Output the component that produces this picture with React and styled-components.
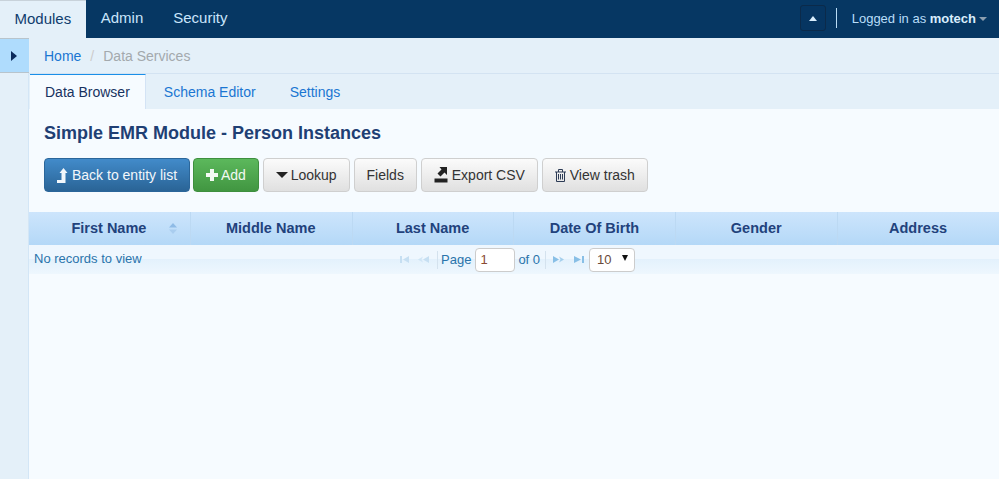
import React from "react";
import styled, { createGlobalStyle } from "styled-components";

const Global = createGlobalStyle`
  html, body { margin: 0; padding: 0; }
  body {
    font-family: "Liberation Sans", Arial, sans-serif;
    font-size: 14px;
    background: #f6fbff;
    color: #333;
  }
  * { box-sizing: border-box; }
`;

const Page = styled.div`
  width: 999px;
  height: 479px;
  display: flex;
  flex-direction: column;
  overflow: hidden;
`;

const Navbar = styled.div`
  height: 38px;
  flex: none;
  background: #063763;
  display: flex;
  align-items: stretch;
`;

const NavTab = styled.div`
  padding: 0 ${(p) => (p.$active ? "14.5px" : "15px")} 3px;
  display: flex;
  align-items: center;
  font-size: 15px;
  color: ${(p) => (p.$active ? "#0f3d6e" : "#c9e5fb")};
  background: ${(p) => (p.$active ? "#e4f0f9" : "transparent")};
  border-top: ${(p) => (p.$active ? "1px solid #c8d2da" : "none")};
`;

const NavRight = styled.div`
  margin-left: auto;
  display: flex;
  align-items: center;
  padding: 0 12px 2px 0;
`;

const CollapseButton = styled.div`
  width: 26px;
  height: 26px;
  background: #063561;
  border: 1px solid #0b2a4a;
  border-radius: 3px;
  display: flex;
  align-items: center;
  justify-content: center;
  margin-right: 10px;
`;

const UpCaret = styled.span`
  width: 0;
  height: 0;
  border-left: 4px solid transparent;
  border-right: 4px solid transparent;
  border-bottom: 5px solid #d9eefd;
`;

const NavDivider = styled.div`
  width: 1px;
  height: 20px;
  background: #b9dcf5;
  margin-right: 15px;
`;

const UserText = styled.div`
  font-size: 13px;
  color: #b9def9;
  b { color: #d8edfc; }
`;

const UserCaret = styled.span`
  display: inline-block;
  width: 0;
  height: 0;
  margin-left: 3px;
  vertical-align: 2px;
  border-left: 4px solid transparent;
  border-right: 4px solid transparent;
  border-top: 4px solid #8c9fb0;
`;

const Body = styled.div`
  flex: 1;
  display: flex;
  min-height: 0;
`;

const Sidebar = styled.div`
  width: 29px;
  flex: none;
  background: #e4f0f9;
  border-right: 1px solid #d3e6f6;
`;

const SidebarToggle = styled.div`
  height: 35px;
  width: 29px;
  background: #afdcfd;
  border-top: 1px solid #b8c4cc;
  border-bottom: 1px solid #b8c4cc;
  display: flex;
  align-items: center;
  justify-content: center;
  padding-right: 1px;
`;

const RightCaret = styled.span`
  width: 0;
  height: 0;
  border-top: 5px solid transparent;
  border-bottom: 5px solid transparent;
  border-left: 6px solid #0b2a5c;
`;

const Main = styled.div`
  flex: 1;
  min-width: 0;
  display: flex;
  flex-direction: column;
`;

const Breadcrumb = styled.div`
  height: 36px;
  flex: none;
  background: #e4f0f9;
  border-bottom: 1px solid #d3e3f2;
  display: flex;
  align-items: center;
  padding: 1px 0 0 15px;
  font-size: 14px;
  color: #a3a9ad;
`;

const Crumb = styled.a`
  color: #1a76d2;
`;

const Slash = styled.span`
  color: #ccc;
  padding: 0 9px;
`;

const Tabs = styled.div`
  height: 35px;
  flex: none;
  background: #e4f0f9;
  display: flex;
  align-items: stretch;
  padding-left: 1px;
`;

const Tab = styled.div`
  display: flex;
  align-items: center;
  font-size: 14px;
  padding: 0 ${(p) => (p.$active ? "15px" : "16px")} 0 ${(p) => (p.$active ? "15px" : "18px")};
  color: ${(p) => (p.$active ? "#17325f" : "#1a76d2")};
  background: ${(p) => (p.$active ? "#f6fbff" : "transparent")};
  border-top: 1px solid ${(p) => (p.$active ? "#1a8fe8" : "transparent")};
  border-right: ${(p) => (p.$active ? "1px solid #d3e3f5" : "none")};
`;

const Content = styled.div`
  flex: 1;
  background: #f6fbff;
`;

const Heading = styled.h1`
  margin: 0;
  padding: 14px 0 0 15px;
  height: 49px;
  font-size: 18px;
  line-height: 20px;
  font-weight: bold;
  color: #1f3f74;
`;

const Toolbar = styled.div`
  display: flex;
  gap: 3.89px;
  padding-left: 15px;
  height: 54px;
`;

const buttonColors = {
  primary: "background: linear-gradient(#428bca, #2a6496); border-color: #2b669a; color: #f2f7fb; margin-right: -1px;",
  success: "background: linear-gradient(#5cb85c, #419641); border-color: #3e8f3e; color: #f2f9f2;",
  plain: "background: linear-gradient(#fbfbfb, #e0e0e0); border-color: #cfcfcf; color: #333;",
};

const Button = styled.div`
  height: 34px;
  padding: 0 12px;
  display: flex;
  align-items: center;
  gap: 3px;
  font-size: 14px;
  border: 1px solid;
  border-radius: 4px;
  ${(p) => buttonColors[p.$kind || "plain"]}
`;

const GridHeader = styled.div`
  height: 33px;
  display: flex;
  background: linear-gradient(#cde5fc, #b4d8f7);
`;

const HeaderCell = styled.div`
  flex: 1;
  position: relative;
  display: flex;
  align-items: center;
  justify-content: center;
  font-size: 14.5px;
  font-weight: bold;
  color: #22427c;
  padding: 0 1px 2px 0;
  border-right: 1px solid #bcd9f3;
  &:last-child { border-right: none; }
`;

const SortIcon = styled.svg`
  position: absolute;
  right: 13px;
  top: 11px;
`;

const Pager = styled.div`
  height: 29px;
  position: relative;
  display: flex;
  align-items: center;
  font-size: 13px;
  color: #2a74ab;
  background: linear-gradient(#eff7fe 0%, #eff7fe 48%, #e3f1fc 48%, #eef7fe 100%);
`;

const PagerInfo = styled.div`
  position: absolute;
  left: 5px;
  top: 6px;
`;

const PagerCenter = styled.div`
  display: flex;
  align-items: center;
  margin-left: 371px;
`;

const PagerIcon = styled.svg`
  display: block;
  margin-right: ${(p) => p.$gap || 0}px;
`;

const PagerSep = styled.div`
  width: 1px;
  height: 18px;
  background: #d4e2ee;
  margin: ${(p) => p.$margin};
`;

const PageInput = styled.div`
  width: 40px;
  height: 24px;
  margin: 0 3px 0 4px;
  padding: 0 4px;
  background: #fff;
  border: 1px solid #ccc;
  border-radius: 4px;
  color: #8a4b33;
  display: flex;
  align-items: center;
`;

const PageSize = styled.div`
  width: 46px;
  height: 24px;
  margin-left: 5px;
  padding: 0 6px 0 7px;
  background: #fff;
  border: 1px solid #ccc;
  border-radius: 4px;
  color: #6a4a3a;
  display: flex;
  align-items: center;
  justify-content: space-between;
`;

const SizeCaret = styled.span`
  width: 0;
  height: 0;
  border-left: 3.5px solid transparent;
  border-right: 3.5px solid transparent;
  border-top: 6px solid #111;
  margin-top: -3px;
`;

const LookupCaret = styled.span`
  width: 0;
  height: 0;
  border-left: 6px solid transparent;
  border-right: 6px solid transparent;
  border-top: 6px solid #222;
`;

const BackIcon = () => (
  <svg width="11" height="15" viewBox="0 0 11 15" style={{ marginRight: 1 }}>
    <path d="M6.5 0 L10.5 5 H8.5 V15 H0 V12 H4.5 V5 H2.5 Z" fill="#f2f7fb" />
  </svg>
);

const PlusIcon = () => (
  <svg width="12" height="12" viewBox="0 0 12 12">
    <path d="M4 0 H8 V4 H12 V8 H8 V12 H4 V8 H0 V4 H4 Z" fill="#f4faf4" />
  </svg>
);

const ExportIcon = () => (
  <svg width="14" height="16" viewBox="0 0 14 16" style={{ marginRight: 1 }}>
    <path d="M0.5 11.5 H13.5 V15.5 H0.5 Z" fill="#222" />
    <path d="M5.5 0 H13 V8 L10.5 5.5 L6.5 9.5 L3.5 6.5 L7.5 2.5 Z" fill="#222" />
  </svg>
);

const TrashIcon = () => (
  <svg width="11" height="13" viewBox="0 0 11 13" fill="none" stroke="#2c3b55" strokeWidth="1" style={{ marginRight: 1 }}>
    <path d="M0 3 H11 M1.5 3 V12.5 H9.5 V3 M3.5 3 V0.5 H7.5 V3 M3.5 5 V10.5 M5.5 5 V10.5 M7.5 5 V10.5" />
  </svg>
);

const pagerPaths = {
  first: <path d="M0 0 H2 V7 H0 Z M3 3.5 L9 0 V7 Z" />,
  prev: (
    <>
      <path d="M0 3.5 L5 0.5 L3.5 3.5 L5 6.5 Z" opacity="0.7" />
      <path d="M5 3.5 L11 0 V7 Z" />
    </>
  ),
  next: (
    <>
      <path d="M0 0 L6 3.5 L0 7 Z" />
      <path d="M6 0.5 L11 3.5 L6 6.5 L7.5 3.5 Z" opacity="0.7" />
    </>
  ),
  last: <path d="M0 0 L7 3.5 L0 7 Z M8 0 H10 V7 H8 Z" />,
};

const pagerWidths = { first: 9, prev: 11, next: 11, last: 10 };

const PagerGlyph = ({ name, disabled, gap }) => (
  <PagerIcon
    $gap={gap}
    width={pagerWidths[name]}
    height="7"
    viewBox={`0 0 ${pagerWidths[name]} 7`}
    fill={disabled ? "#c6dff2" : "#88bfe6"}
  >
    {pagerPaths[name]}
  </PagerIcon>
);

const columns = ["First Name", "Middle Name", "Last Name", "Date Of Birth", "Gender", "Address"];

export default function App() {
  return (
    <Page>
      <Global />
      <Navbar>
        <NavTab $active>Modules</NavTab>
        <NavTab>Admin</NavTab>
        <NavTab>Security</NavTab>
        <NavRight>
          <CollapseButton>
            <UpCaret />
          </CollapseButton>
          <NavDivider />
          <UserText>
            Logged in as <b>motech</b>
            <UserCaret />
          </UserText>
        </NavRight>
      </Navbar>
      <Body>
        <Sidebar>
          <SidebarToggle>
            <RightCaret />
          </SidebarToggle>
        </Sidebar>
        <Main>
          <Breadcrumb>
            <Crumb>Home</Crumb>
            <Slash>/</Slash>
            Data Services
          </Breadcrumb>
          <Tabs>
            <Tab $active>Data Browser</Tab>
            <Tab>Schema Editor</Tab>
            <Tab>Settings</Tab>
          </Tabs>
          <Content>
            <Heading>Simple EMR Module - Person Instances</Heading>
            <Toolbar>
              <Button $kind="primary">
                <BackIcon />
                Back to entity list
              </Button>
              <Button $kind="success">
                <PlusIcon />
                Add
              </Button>
              <Button>
                <LookupCaret />
                Lookup
              </Button>
              <Button>Fields</Button>
              <Button>
                <ExportIcon />
                Export CSV
              </Button>
              <Button>
                <TrashIcon />
                View trash
              </Button>
            </Toolbar>
            <GridHeader>
              {columns.map((c, i) => (
                <HeaderCell key={c}>
                  {c}
                  {i === 0 && (
                    <SortIcon width="8" height="11" viewBox="0 0 8 11">
                      <path d="M4 0 L8 4.5 H0 Z" fill="#8fbbe6" />
                      <path d="M4 11 L8 6.5 H0 Z" fill="#a9cdef" />
                    </SortIcon>
                  )}
                </HeaderCell>
              ))}
            </GridHeader>
            <Pager>
              <PagerInfo>No records to view</PagerInfo>
              <PagerCenter>
                <PagerGlyph name="first" disabled gap={9} />
                <PagerGlyph name="prev" disabled />
                <PagerSep $margin="0 3px 0 8px" />
                Page
                <PageInput>1</PageInput>
                of 0
                <PagerSep $margin="0 7px 0 5px" />
                <PagerGlyph name="next" gap={10} />
                <PagerGlyph name="last" />
                <PageSize>
                  10
                  <SizeCaret />
                </PageSize>
              </PagerCenter>
            </Pager>
          </Content>
        </Main>
      </Body>
    </Page>
  );
}
